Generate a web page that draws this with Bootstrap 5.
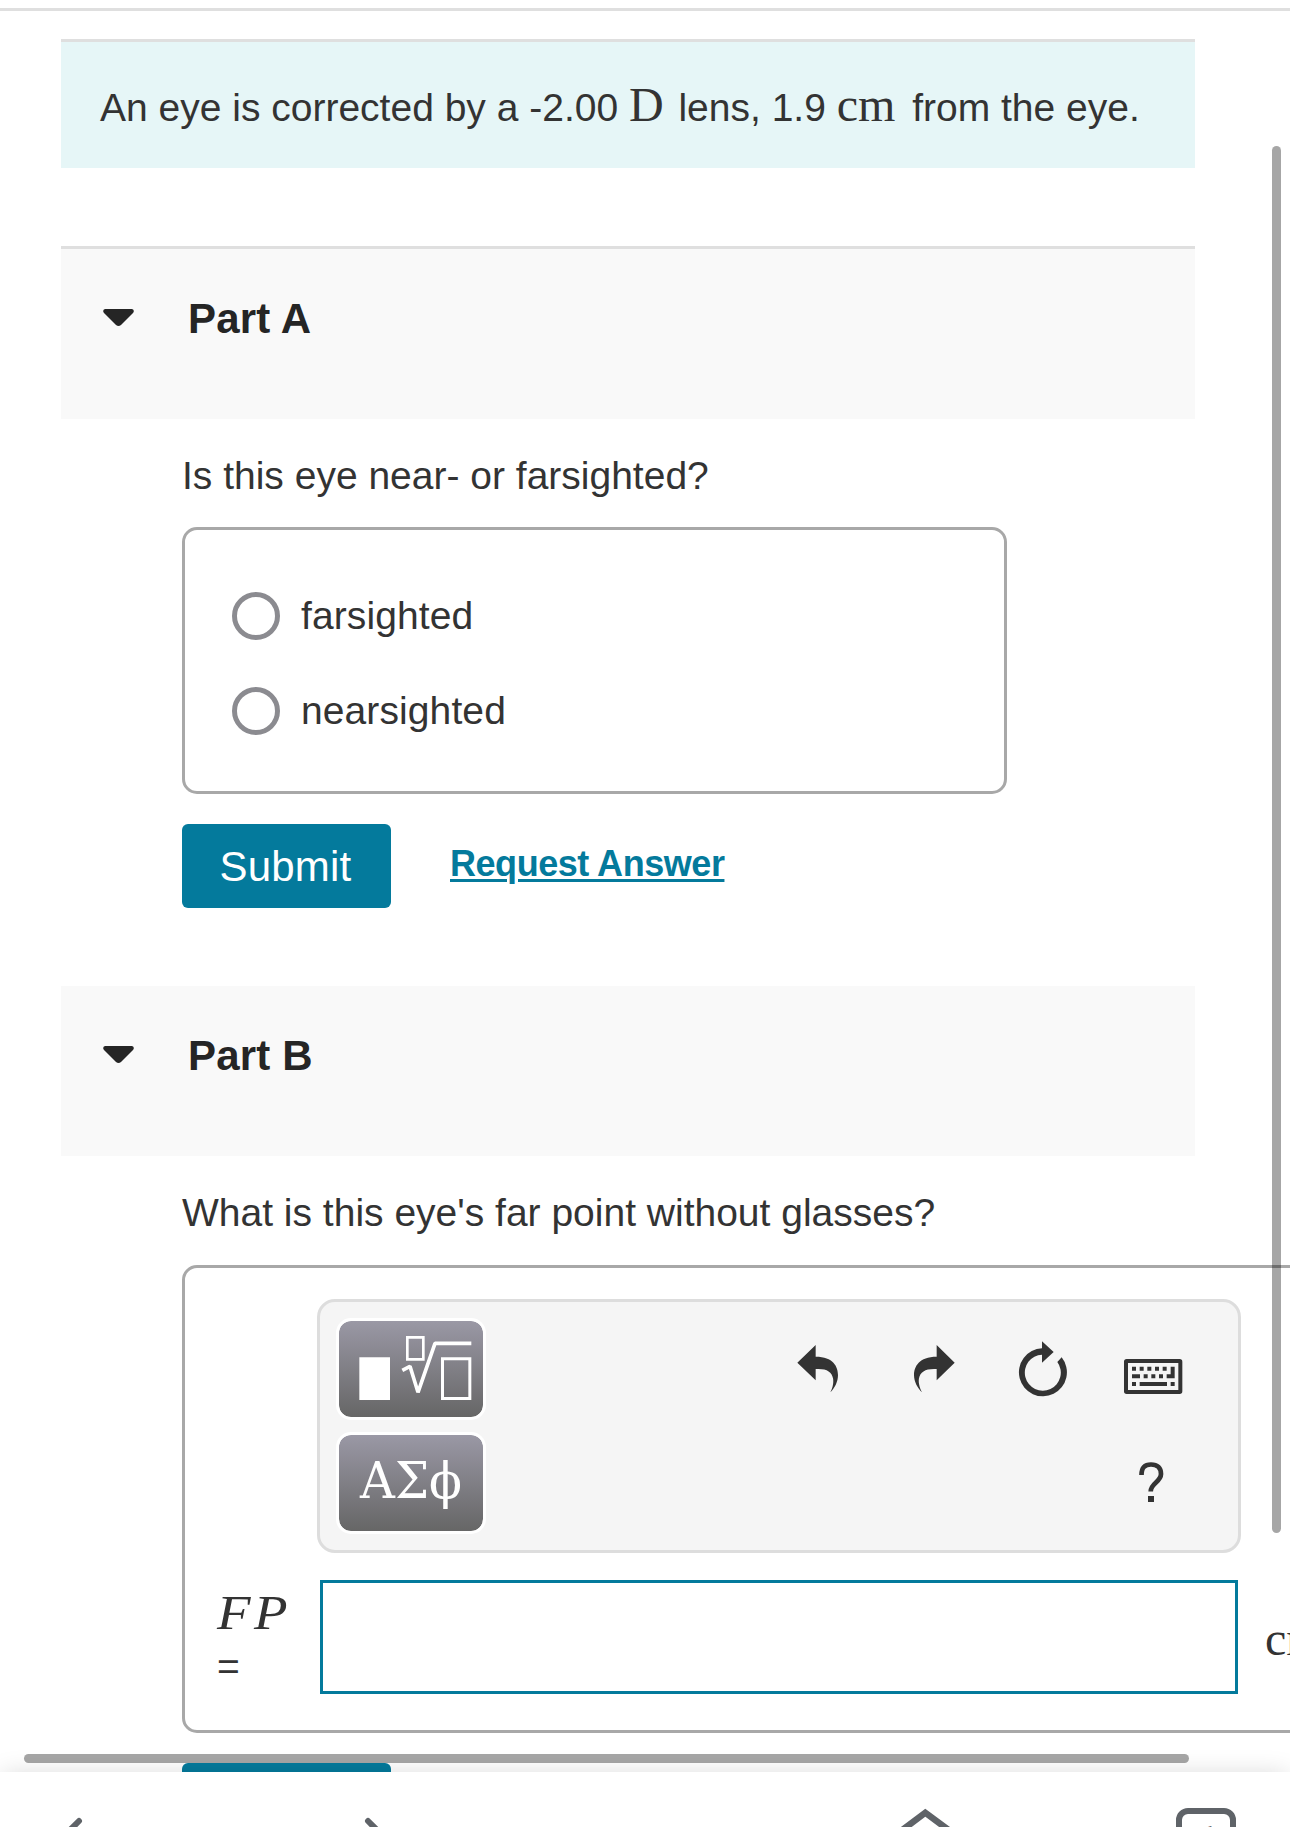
<!DOCTYPE html>
<html lang="en">
<head>
<meta charset="utf-8">
<meta name="viewport" content="width=device-width, initial-scale=1">
<title>Corrective lens exercise</title>
<link href="https://cdn.jsdelivr.net/npm/bootstrap@5.3.0/dist/css/bootstrap.min.css" rel="stylesheet">
<style>
  body { font-family: "Liberation Sans", Arial, sans-serif; font-size: 39px; line-height: 48px; color: #333; background: #fff; }
  .screen { width: 1290px; height: 1827px; }
  .top-rule { height: 3px; margin-top: 8px; background: #dfdfdf; }
  .main-col { margin: 28px 0 0 61px; width: 1134px; }
  .intro { height: 129px; border-top: 3px solid #dfdfdf; background: #e6f6f7; padding: 39px 0 0 39px; white-space: nowrap; }
  .lens-gap { margin-left: 4px; }
  .from-gap { margin-left: 6px; }
  .tex { font-family: "Liberation Serif", "Times New Roman", serif; font-size: 48px; line-height: 1; }
  .part-head { background: #f9f9f9; height: 170px; padding-left: 42px; }
  .part-head h2 { font-size: 42px; line-height: 48px; font-weight: 700; color: #252525; margin: 0 0 0 54px; letter-spacing: .2px; }
  .part-a { margin-top: 78px; height: 173px; border-top: 3px solid #dfdfdf; padding-top: 46px; }
  .part-b { margin-top: 78px; padding-top: 46px; }
  .caret { margin-top: 14px; }
  .part-body { margin-left: 121px; }
  .question { margin: 0; white-space: nowrap; padding-top: 33px; height: 108px; }
  .question-b { height: 109px; }
  .choices { width: 825px; height: 267px; border: 3px solid #a8a8a8; border-radius: 15px; padding: 62px 0 0 47px; }
  .choices .form-check { padding: 0; margin: 0 0 47px; min-height: 0; height: 48px; }
  .choices .form-check-input { width: 48px; height: 48px; margin: 0; float: none; border: 5px solid #8b8b90; background: #fff; }
  .choices label { margin: -1px 0 0 21px; letter-spacing: .1px; }
  .actions { margin-top: 30px; }
  .btn-submit { width: 209px; height: 84px; background: #047a9c; color: #fff; border: 0; border-radius: 6px; font-size: 42px; line-height: 48px; padding: 1px 2px 0 0; letter-spacing: .2px; }
  .req-link { font-size: 36px; font-weight: 700; color: #047a9c; margin-left: 59px; padding-top: 16px; letter-spacing: -.45px; text-decoration-thickness: 3px; text-underline-offset: 3px; }
  .answer { width: 1300px; height: 468px; border: 3px solid #a8a8a8; border-radius: 15px; padding: 31px 0 0 32px; }
  .toolbar { width: 924px; height: 254px; margin-left: 100px; border: 3px solid #ddd; border-radius: 18px; background: #f5f5f5; padding: 16px; }
  .tool-col { row-gap: 12px; }
  .tool-icons { margin-right: 12px; }
  .tool { width: 150px; height: 102px; border: 3px solid #fff; border-radius: 15px; padding: 0; background: linear-gradient(#9a98a5, #666) padding-box; overflow: hidden; }
  .tool svg { display: block; }
  .greek { font-family: "DejaVu Serif", serif; font-size: 50px; fill: #fff; }
  .field-row { margin-top: 27px; height: 114px; }
  .field-label { width: 103px; padding-top: 9px; }
  .field-label div { height: 54px; }
  .field-label .tex { font-size: 49px; font-style: italic; letter-spacing: 3px; line-height: 48px; transform: scaleX(1.12); transform-origin: left; }
  .field-input { width: 918px; height: 114px; flex: none; border: 3px solid #047a9c; border-radius: 0; }
  .unit { margin-left: 27px; padding-top: 35px; }
  .bar { position: absolute; background: rgba(0,0,0,.35); border-radius: 5px; z-index: 3; }
  .bar-y { left: 1272px; top: 146px; width: 9px; height: 1387px; }
  .bar-x { left: 24px; top: 1754px; width: 1165px; height: 9px; }
  .browser-bar { position: absolute; left: 0; top: 1772px; width: 1290px; height: 55px; background: #fff; z-index: 4; box-shadow: 0 0 26px -3px rgba(0,0,0,.17); }
</style>
</head>
<body>
<div class="screen position-relative overflow-hidden">
  <div class="d-flex flex-column">
    <div class="top-rule"></div>
    <main class="main-col">
      <div class="intro">An eye is corrected by a -2.00 <span class="tex">D</span><span class="lens-gap"> lens, 1.9 </span><span class="tex">cm</span><span class="from-gap"> from the eye.</span></div>

      <section>
        <div class="part-head part-a d-flex">
          <svg class="caret" width="31" height="17" viewBox="0 0 31 17"><path d="M2 0H29Q32 1 30 4L18 16Q15.500 18 13 16L1 4Q-1 1 2 0Z" fill="#252525"/></svg>
          <h2>Part A</h2>
        </div>
        <div class="part-body">
          <p class="question">Is this eye near- or farsighted?</p>
          <div class="choices">
            <div class="form-check d-flex align-items-center"><input class="form-check-input" type="radio" name="sight" id="far"><label for="far">farsighted</label></div>
            <div class="form-check d-flex align-items-center"><input class="form-check-input" type="radio" name="sight" id="near"><label for="near">nearsighted</label></div>
          </div>
          <div class="d-flex actions">
            <button class="btn btn-submit">Submit</button>
            <a class="req-link" href="#">Request Answer</a>
          </div>
        </div>
      </section>

      <section>
        <div class="part-head part-b d-flex">
          <svg class="caret" width="31" height="17" viewBox="0 0 31 17"><path d="M2 0H29Q32 1 30 4L18 16Q15.500 18 13 16L1 4Q-1 1 2 0Z" fill="#252525"/></svg>
          <h2>Part B</h2>
        </div>
        <div class="part-body">
          <p class="question question-b">What is this eye's far point without glasses?</p>
          <div class="answer">
            <div class="toolbar d-flex justify-content-between">
              <div class="d-flex flex-column tool-col">
                <button class="tool" aria-label="Templates">
                  <svg width="144" height="96" viewBox="117 213 432 288"><path d="M178 322H270V450H178Z" fill="#fff"/><g fill="none" stroke="#fff"><path d="M322 262H370V328H322Z" stroke-width="8"/><path d="M427.500 326.500H509.500V445.500H427.500Z" stroke-width="9"/><path d="M307 361L330 349L354 427L405 280H514" stroke-width="11" stroke-linejoin="bevel"/></g></svg>
                </button>
                <button class="tool" aria-label="Symbols">
                  <svg width="144" height="96" viewBox="0 0 144 96"><text class="greek" x="21" y="63" textLength="102" lengthAdjust="spacingAndGlyphs">ΑΣϕ</text></svg>
                </button>
              </div>
              <svg class="tool-icons" width="440" height="216" viewBox="770 1318 440 216">
                <g fill="#333" transform="translate(770 1250) scale(.33333)">
                  <path d="M82 338L137 285V320C190 320 204 350 204 375C204 395 194 415 181 427C190 410 191 395 189 385C185 365 170 355 137 357V391Z"/>
                  <path d="M554 338L500 285V320C447 320 432 350 432 375C432 395 443 415 456 427C447 410 445 395 447 385C451 365 467 355 500 357V391Z"/>
                  <path d="M816 274L851 306L816 338V314A54 54 0 1 0 862 336L875 322A72 72 0 1 1 816 295Z"/>
                  <path fill-rule="evenodd" d="M1070 327H1229Q1237 327 1237 335V424Q1237 432 1229 432H1070Q1062 432 1062 424V335Q1062 327 1070 327ZM1074 339V420H1225V339Z"/>
                  <path d="M1086 350h12v12h-12zM1109 350h12v12h-12zM1132 350h12v12h-12zM1155 350h12v12h-12zM1178 350h12v12h-12zM1202 350h12v35h-24v-12h12zM1086 373h24v12h-24zM1121 373h12v12h-12zM1144 373h12v12h-12zM1167 373h12v12h-12zM1086 396h12v12h-12zM1109 396h82v12h-82zM1202 396h12v12h-12z"/>
                  <path d="M1134 738H1152V756H1134Z"/>
                </g>
                <path d="M1141.500 1475C1141.500 1467 1145 1464.500 1151 1464.500C1157.500 1464.500 1161 1468 1161 1474C1161 1482 1150.700 1483 1150.700 1491.500" fill="none" stroke="#333" stroke-width="4.700"/>
              </svg>
            </div>
            <div class="field-row d-flex">
              <div class="field-label"><div class="tex">FP</div><div>=</div></div>
              <input class="form-control field-input" type="text" aria-label="Far point">
              <span class="tex unit">cm</span>
            </div>
          </div>
          <div class="actions"><button class="btn btn-submit">Submit</button></div>
        </div>
      </section>
    </main>
  </div>

  <div class="bar bar-y"></div>
  <div class="bar bar-x"></div>

  <nav class="browser-bar">
    <svg width="1290" height="55" viewBox="0 1772 1290 55" fill="none" stroke="#5f6368" stroke-width="6">
      <path d="M79 1821L57 1843M368 1821L390 1843" stroke-linecap="round"/>
      <path d="M895 1835.500L925.300 1812.700L956 1835.500" stroke-width="6.500"/>
      <rect x="1179" y="1811" width="54" height="54" rx="9"/>
      <text x="1198" y="1850" font-size="34" font-weight="700" font-family="Roboto, sans-serif" fill="#5f6368" stroke="none">1</text>
    </svg>
  </nav>
</div>
<script src="https://cdn.jsdelivr.net/npm/bootstrap@5.3.0/dist/js/bootstrap.bundle.min.js"></script>
</body>
</html>
